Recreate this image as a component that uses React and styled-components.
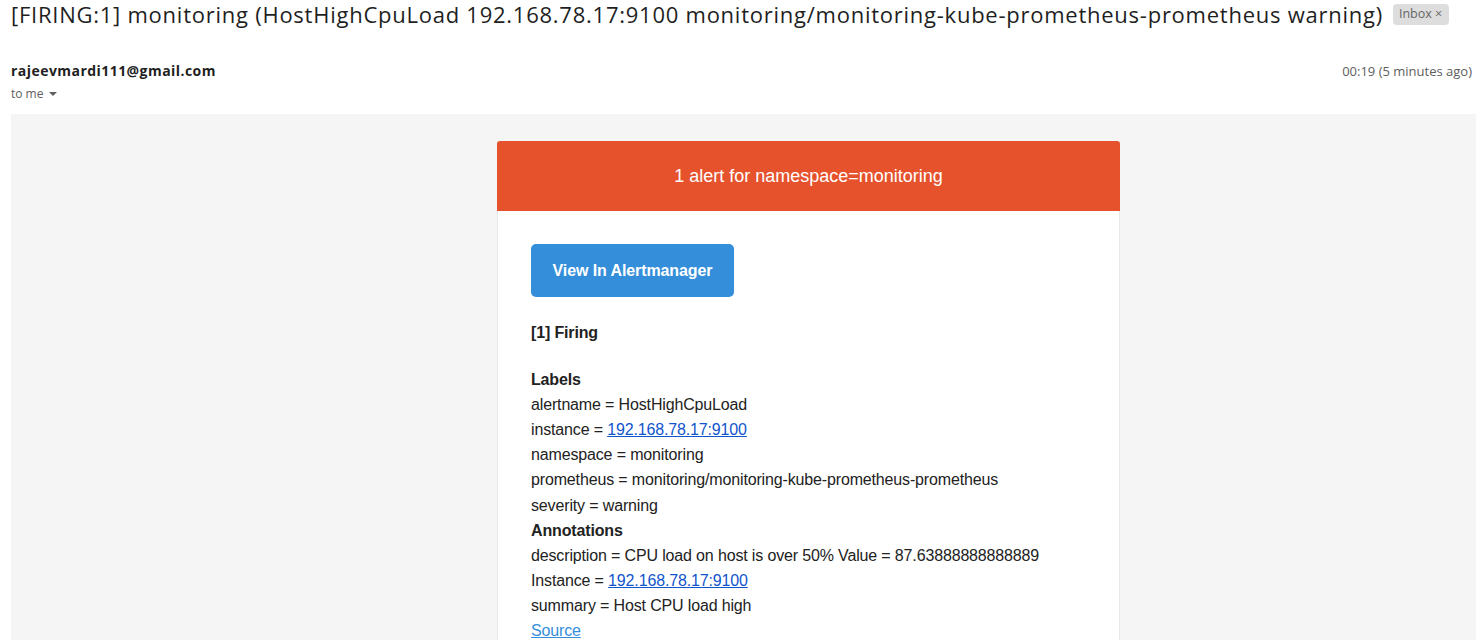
import React from "react";
import styled, { createGlobalStyle } from "styled-components";

const GlobalStyle = createGlobalStyle`
    body {
        margin: 0;
        background: #fff;
        font-family: "Open Sans", Roboto, Arial, sans-serif;
    }
`;

const Page = styled.div`
    width: 1476px;
    height: 640px;
    overflow: hidden;
`;

const Subject = styled.div`
    display: flex;
    align-items: center;
    padding: 0 0 0 11px;
    height: 28px;
    .text {
        font-size: 22px;
        letter-spacing: 0.75px;
        color: #1f1f1f;
        white-space: nowrap;
    }
`;

const Chip = styled.span`
    margin-left: 10px;
    background: #dddddd;
    color: #666;
    font-family: "Open Sans", Roboto, Arial, sans-serif;
    font-size: 12.5px;
    border-radius: 4px;
    padding: 2px 7px 3px 6px;
    line-height: 16px;
`;

const SenderRow = styled.div`
    display: flex;
    justify-content: space-between;
    padding: 34px 4px 0 11px;
    height: 52px;
    box-sizing: border-box;
    font-family: "Open Sans", Roboto, Arial, sans-serif;
    .name {
        font-size: 14px;
        font-weight: bold;
        letter-spacing: 0.45px;
        color: #1f1f1f;
        line-height: 18px;
    }
    .to {
        font-size: 12px;
        color: #5e5e5e;
        line-height: 16px;
        margin-top: 6px;
        display: flex;
        align-items: center;
        gap: 6px;
    }
    .time {
        font-size: 13px;
        color: #5e5e5e;
        line-height: 18px;
    }
`;

const Caret = styled.span`
    width: 0;
    height: 0;
    border-left: 4px solid transparent;
    border-right: 4px solid transparent;
    border-top: 4px solid #5e5e5e;
`;

const MailBody = styled.div`
    margin: 34px 0 0 11px;
    background: #f5f5f5;
    padding: 27px 0 0 486px;
    height: 600px;
`;

const Card = styled.div`
    width: 623px;
    box-sizing: border-box;
    background: #fff;
    border: 1px solid #e9e9e9;
    border-radius: 3px;
    font-family: "Liberation Sans", Arial, sans-serif;
    color: #222;
`;

const Header = styled.div`
    background: #e6522c;
    color: #fff;
    height: 70px;
    margin: -1px -1px 0;
    border-radius: 3px 3px 0 0;
    display: flex;
    align-items: center;
    justify-content: center;
    font-size: 18px;
`;

const Content = styled.div`
    padding: 33px 33px;
    font-size: 16px;
    line-height: 25.1px;
    letter-spacing: -0.15px;
`;

const Button = styled.a`
    display: inline-flex;
    align-items: center;
    justify-content: center;
    width: 203px;
    height: 53px;
    background: #348eda;
    color: #fff;
    font-weight: bold;
    letter-spacing: -0.1px;
    border-radius: 5px;
    text-decoration: none;
`;

const Heading = styled.div`
    font-weight: bold;
    margin-top: ${(p) => p.$top || 0}px;
`;

const Line = styled.div``;

const Link = styled.a`
    color: ${(p) => (p.$light ? "#348eda" : "#1155cc")};
    text-decoration: underline;
`;

const labels = [
    ["alertname", "HostHighCpuLoad"],
    ["instance", "192.168.78.17:9100", true],
    ["namespace", "monitoring"],
    ["prometheus", "monitoring/monitoring-kube-prometheus-prometheus"],
    ["severity", "warning"],
];

const annotations = [
    ["description", "CPU load on host is over 50% Value = 87.63888888888889"],
    ["Instance", "192.168.78.17:9100", true],
    ["summary", "Host CPU load high"],
];

const Pair = ({ k, v, link }) => (
    <Line>
        {k} = {link ? <Link href="#">{v}</Link> : v}
    </Line>
);

export default function App() {
    return (
        <Page>
            <GlobalStyle />
            <Subject>
                <span className="text">
                    [FIRING:1] monitoring (HostHighCpuLoad 192.168.78.17:9100
                    monitoring/monitoring-kube-prometheus-prometheus warning)
                </span>
                <Chip>Inbox ×</Chip>
            </Subject>
            <SenderRow>
                <div>
                    <div className="name">rajeevmardi111@gmail.com</div>
                    <div className="to">
                        to me <Caret />
                    </div>
                </div>
                <div className="time">00:19 (5 minutes ago)</div>
            </SenderRow>
            <MailBody>
                <Card>
                    <Header>1 alert for namespace=monitoring</Header>
                    <Content>
                        <Button href="#">View In Alertmanager</Button>
                        <Heading $top={23}>[1] Firing</Heading>
                        <Heading $top={22}>Labels</Heading>
                        {labels.map(([k, v, l]) => (
                            <Pair key={k} k={k} v={v} link={l} />
                        ))}
                        <Heading>Annotations</Heading>
                        {annotations.map(([k, v, l]) => (
                            <Pair key={k} k={k} v={v} link={l} />
                        ))}
                        <Line>
                            <Link href="#" $light>
                                Source
                            </Link>
                        </Line>
                    </Content>
                </Card>
            </MailBody>
        </Page>
    );
}
